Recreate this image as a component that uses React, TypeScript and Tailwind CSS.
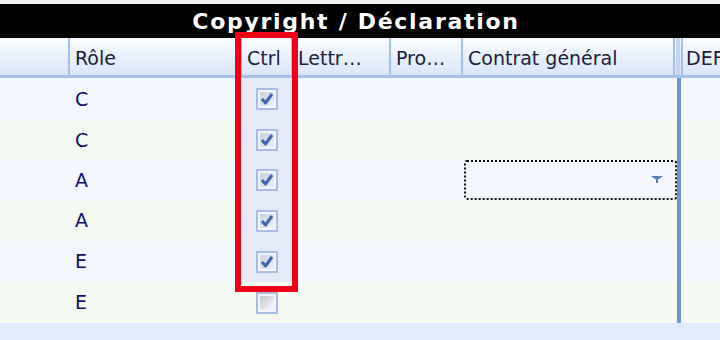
import React from "react";

const cols = [
  { key: "id", label: "", width: 70 },
  { key: "role", label: "Rôle", width: 172 },
  { key: "ctrl", label: "Ctrl", width: 51 },
  { key: "lettr", label: "Lettr…", width: 98 },
  { key: "pro", label: "Pro…", width: 72 },
  { key: "contrat", label: "Contrat général", width: 212 },
];

const rows = [
  { role: "C", ctrl: true, h: "h-[42px]", tint: "bg-[#f4f8fe]" },
  { role: "C", ctrl: true, h: "h-[40px]", tint: "bg-[#f4faf1]" },
  { role: "A", ctrl: true, h: "h-[40px]", tint: "bg-[#f4f8fe]", combo: true },
  { role: "A", ctrl: true, h: "h-[41px]", tint: "bg-[#f4faf1]" },
  { role: "E", ctrl: true, h: "h-[41px]", tint: "bg-[#f4f8fe]" },
  { role: "E", ctrl: false, h: "h-[41px]", tint: "bg-[#f4faf1]" },
];

function CheckBox({ checked }: { checked: boolean }) {
  return (
    <div className="w-[22px] h-[22px] border-2 border-[#a7bde3] bg-[#f4f6fb] p-[2px]">
      <div
        className={
          checked
            ? "w-full h-full bg-gradient-to-br from-[#c9d1e2] to-[#eceff7] flex items-center justify-center"
            : "w-full h-full bg-gradient-to-br from-[#bfc4cc] via-[#e0e2e7] to-[#fafafa]"
        }
      >
        {checked && (
          <svg width="14" height="14" viewBox="0 0 14 14">
            <path
              d="M2 7 L5.5 11 L12 2"
              fill="none"
              stroke="#3f66ad"
              strokeWidth="3"
              strokeLinejoin="round"
            />
          </svg>
        )}
      </div>
    </div>
  );
}

export default function App() {
  return (
    <div
      className="relative w-[720px] h-[340px] overflow-hidden bg-[#e0ecfb] text-[19px]"
      style={{ fontFamily: '"DejaVu Sans", Verdana, sans-serif' }}
    >
      {/* top strip */}
      <div className="h-[4px] bg-[#eef0f4]" />

      {/* title bar */}
      <div className="h-[34px] bg-black overflow-hidden flex justify-center">
        <span className="text-white font-bold text-[22px] leading-[34px] tracking-[1.7px] pt-[1px] pr-[8px]">
          Copyright / Déclaration
        </span>
      </div>

      {/* header */}
      <div className="flex h-[40px] bg-gradient-to-b from-[#fafcff] to-[#d9e6fb] border-b-[3px] border-[#a9c1e8] text-[#1c1c3a]">
        {cols.map((c) => (
          <div
            key={c.key}
            className="shrink-0 border-r-2 border-[#a6bfe6] flex items-center pl-[5px] pt-[4px] whitespace-nowrap overflow-hidden"
            style={{ width: c.width }}
          >
            {c.label}
          </div>
        ))}
        <div className="shrink-0 w-[8px] flex justify-center border-r-2 border-[#a6bfe6]">
          <div className="w-[4px] bg-[#c2d5f2]" />
        </div>
        <div className="flex-1 flex items-center pl-[3px] pt-[4px] whitespace-nowrap overflow-hidden">DEF</div>
      </div>

      {/* body */}
      {rows.map((r, i) => (
        <div key={i} className={`flex ${r.h} ${r.tint} text-[#101068]`}>
          <div className="shrink-0 w-[70px]" />
          <div className="shrink-0 w-[172px] flex items-center pl-[5px]">{r.role}</div>
          <div
            className={`shrink-0 w-[51px] flex items-center justify-center pr-[2px] ${
              r.ctrl ? "bg-[#e5eaf8]" : ""
            }`}
          >
            <CheckBox checked={r.ctrl} />
          </div>
          <div className="shrink-0 w-[98px]" />
          <div className="shrink-0 w-[72px]" />
          <div className="shrink-0 w-[214px] flex items-center pl-[1px]">
            {r.combo && (
              <div className="w-full h-full border-2 border-dotted border-[#111] rounded-[3px] flex items-center justify-end pr-[12px]">
                <svg width="12" height="8" viewBox="0 0 12 8">
                  <path d="M0 0 H12 L8 3 H7 V7 H5 V3 H4 Z" fill="#5a7ec0" />
                </svg>
              </div>
            )}
          </div>
          <div className="shrink-0 w-[4px] bg-[#6a95d3]" />
          <div className="flex-1" />
        </div>
      ))}

      {/* red highlight around the Ctrl column */}
      <div className="absolute left-[235px] top-[32px] w-[63px] h-[260px] border-[6px] border-[#f00018] pointer-events-none" />
    </div>
  );
}
